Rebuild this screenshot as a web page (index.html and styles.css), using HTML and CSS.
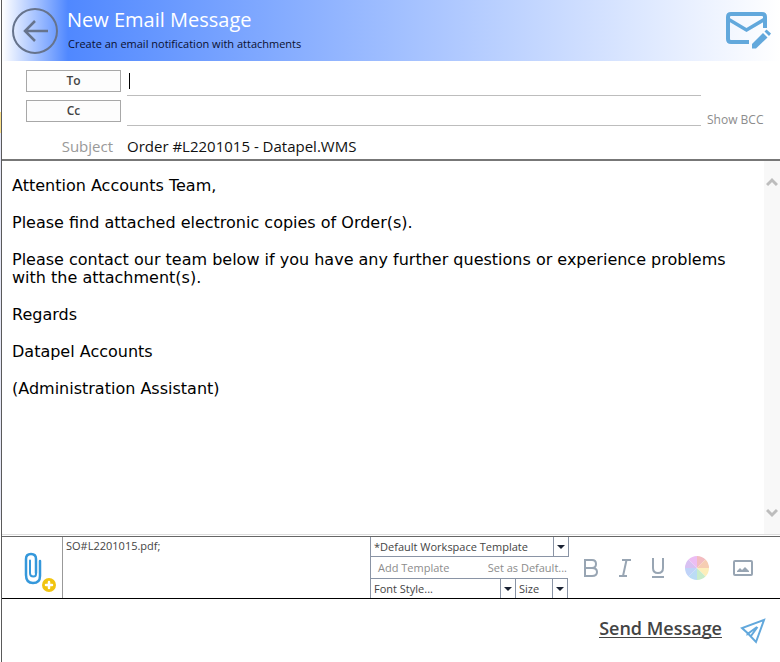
FILE: index.html
```html
<!DOCTYPE html>
<html lang="en">
<head>
  <meta charset="UTF-8">
  <meta name="viewport" content="width=device-width, initial-scale=1.0">
  <title>New Email Message</title>
  <link rel="stylesheet" href="styles.css">
</head>
<body>
  <form class="window">
    <header class="header">
      <button type="button" class="icon-btn" aria-label="Back">
        <svg width="46" height="46" viewBox="0 0 46 46" fill="none" stroke="#66738c">
          <circle cx="23" cy="23" r="22" stroke-width="2"/>
          <path d="M36 23H13M23 13L13 23L23 33" stroke-width="2.500"/>
        </svg>
      </button>
      <div class="heading">
        <h1>New Email Message</h1>
        <p>Create an email notification with attachments</p>
      </div>
      <svg class="mail" width="46" height="38" viewBox="0 0 46 38" fill="none" stroke="#62a8dc">
        <path d="M39 16V5Q39 2 36 2H5Q2 2 2 5V27Q2 30 5 30H23" stroke-width="4"/>
        <path d="M2 7L20.500 18L39 7" stroke-width="3.500"/>
        <path d="M26 36.500V32L37 21L41.500 25.500L30 36.500Z" fill="#62a8dc" stroke="none"/>
        <path d="M38.500 19.500L40.500 17.500L45 21.500L43 24Z" fill="#62a8dc" stroke="none"/>
      </svg>
    </header>

    <section class="address">
      <button type="button" class="pick">To</button>
      <div class="field"><span class="caret"></span><input type="text" aria-label="To"></div>
      <button type="button" class="pick">Cc</button>
      <div class="field"><input type="text" aria-label="Cc"></div>
      <a class="bcc" href="#">Show BCC</a>
      <label class="subject-label" for="subject">Subject</label>
      <input class="subject" id="subject" type="text" value="Order #L2201015 - Datapel.WMS">
    </section>

    <section class="editor">
      <div class="message" contenteditable="true" role="textbox" aria-multiline="true" aria-label="Message" spellcheck="false">
        <p>Attention Accounts Team,</p>
        <p>Please find attached electronic copies of Order(s).</p>
        <p>Please contact our team below if you have any further questions or experience problems with the attachment(s).</p>
        <p>Regards</p>
        <p>Datapel Accounts</p>
        <p>(Administration Assistant)</p>
      </div>
      <div class="scrollbar">
        <button type="button" class="icon-btn" aria-label="Scroll up">
          <svg width="12" height="10" viewBox="0 0 12 10" fill="none" stroke="#bdbdbd" stroke-width="3"><path d="M1 8L6 3L11 8"/></svg>
        </button>
        <button type="button" class="icon-btn" aria-label="Scroll down">
          <svg width="12" height="10" viewBox="0 0 12 10" fill="none" stroke="#bdbdbd" stroke-width="3"><path d="M1 2L6 7L11 2"/></svg>
        </button>
      </div>
    </section>

    <section class="toolbar">
      <button type="button" class="icon-btn attach" aria-label="Add attachment">
        <svg width="32" height="40" viewBox="0 0 32 40" fill="none" stroke="#3598db" stroke-linecap="round">
          <path d="M12 9V22Q12 24.500 9.500 24.500Q6 24.500 6 21V8.500" stroke-width="2"/>
          <path d="M12 21V7Q12 2 7 2Q2 2 2 7V23Q2 31 9 31Q16 31 16 24V9" stroke-width="2.500"/>
          <circle cx="25" cy="33" r="7" fill="#f1c40f" stroke="none"/>
          <path d="M25 30V36M22 33H28" stroke="#fff" stroke-width="2.500"/>
        </svg>
      </button>
      <div class="files">SO#L2201015.pdf;</div>
      <div class="templates">
        <div class="select">
          <select aria-label="Template"><option>*Default Workspace Template</option></select>
        </div>
        <div class="links">
          <a href="#">Add Template</a>
          <a href="#">Set as Default...</a>
        </div>
        <div class="fonts">
          <div class="select style">
            <select aria-label="Font style"><option>Font Style...</option></select>
          </div>
          <div class="select size">
            <select aria-label="Font size"><option>Size</option></select>
          </div>
        </div>
      </div>
      <div class="format">
        <button type="button" class="icon-btn" aria-label="Bold">
          <svg width="16" height="20" viewBox="0 0 16 20" fill="none" stroke="#98a5b3" stroke-width="2"><path d="M2 2H9Q13 2 13 6Q13 10 9 10H2M9 10Q14 10 14 14Q14 18 9 18H2M2 1V19"/></svg>
        </button>
        <button type="button" class="icon-btn" aria-label="Italic">
          <svg width="12" height="20" viewBox="0 0 12 20" fill="none" stroke="#98a5b3" stroke-width="2"><path d="M3 2H12M0 18H8M7.500 2L4 18"/></svg>
        </button>
        <button type="button" class="icon-btn" aria-label="Underline">
          <svg width="14" height="20" viewBox="0 0 14 20" fill="none" stroke="#98a5b3" stroke-width="2"><path d="M2 0V10Q2 15 7 15Q12 15 12 10V0M1 19H13"/></svg>
        </button>
        <button type="button" class="icon-btn" aria-label="Text colour">
          <svg width="24" height="24" viewBox="-12 -12 24 24">
            <path fill="#f3bcc0" d="M0 0V-12A12 12 0 0 1 8.500-8.500Z"/>
            <path fill="#f6cdb2" d="M0 0L8.500-8.500A12 12 0 0 1 12 0Z"/>
            <path fill="#fdeebb" d="M0 0H12A12 12 0 0 1 8.500 8.500Z"/>
            <path fill="#c9eccb" d="M0 0L8.500 8.500A12 12 0 0 1 0 12Z"/>
            <path fill="#bbdcf5" d="M0 0V12A12 12 0 0 1-8.500 8.500Z"/>
            <path fill="#c0d3f8" d="M0 0L-8.500 8.500A12 12 0 0 1-12 0Z"/>
            <path fill="#d8c1f2" d="M0 0H-12A12 12 0 0 1-8.500-8.500Z"/>
            <path fill="#ecbdf3" d="M0 0L-8.500-8.500A12 12 0 0 1 0-12Z"/>
          </svg>
        </button>
        <button type="button" class="icon-btn picture" aria-label="Insert picture">
          <svg width="20" height="16" viewBox="0 0 20 16"><rect x="1" y="1" width="18" height="14" rx="1" fill="none" stroke="#98a5b3" stroke-width="2"/><path fill="#98a5b3" d="M4 12V11L7 8L9 10L12 7L16 11V12Z"/></svg>
        </button>
      </div>
    </section>

    <footer class="footer">
      <button type="submit" class="send">
        <span>Send Message</span>
        <svg width="26" height="26" viewBox="0 0 26 26" fill="none" stroke="#62a8dc" stroke-width="2"><path d="M24 2L2 10L7.500 15L16 24ZM7.500 15V16L17 9M11 18L17.500 9"/></svg>
      </button>
    </footer>
  </form>
</body>
</html>
```
FILE: styles.css
```css
* {
  box-sizing: border-box;
}
body {
  margin: 0;
  padding-left: 1px;
  background: linear-gradient(#fff 112px, #fbe08a 112px, #fbe08a 133px, #e4e6f5 133px, #e4e6f5 520px, #fff 520px);
  font-family: "Open Sans", "Noto Sans", sans-serif;
  font-size: 12px;
  color: #444;
}
h1, p {
  margin: 0;
}
button, input, select {
  font: inherit;
  color: inherit;
}
input {
  width: 100%;
  min-width: 0;
  padding: 0;
  border: 0;
  outline: 0;
  background: none;
}
a {
  color: #8c8c8c;
  text-decoration: none;
}
svg {
  display: block;
}
.icon-btn {
  padding: 0;
  border: 0;
  background: none;
}
.window {
  display: flex;
  flex-direction: column;
  min-height: 100vh;
  border-left: 1px solid #5a5a5a;
  background: #fff;
}

.header {
  display: flex;
  align-items: center;
  gap: 9px;
  height: 61px;
  padding: 0 8px 0 10px;
  background: linear-gradient(90deg, #fff, #5088ff 66px, #fff);
}
.heading {
  flex: 1;
  color: #fff;
}
.heading h1 {
  font-size: 20px;
  line-height: 24px;
  font-weight: 400;
}
.heading p {
  padding: 4px 0 2px 1px;
  font-size: 11px;
  line-height: 16px;
  color: #0a1030;
}

.address {
  display: grid;
  grid-template-columns: 95px 1fr 73px;
  column-gap: 6px;
  padding: 5px 0 0 24px;
  border-bottom: 2px solid #777;
}
.pick {
  grid-column: 1;
  height: 22px;
  margin-top: 4px;
  padding: 0;
  border: 1px solid #a8a8a8;
  background: #fdfdfd;
  font-weight: 600;
  line-height: 18px;
}
.field {
  display: flex;
  align-items: center;
  height: 30px;
  border-bottom: 1px solid #bdbdbd;
}
.caret {
  width: 1px;
  height: 16px;
  margin-left: 2px;
  background: #000;
}
.bcc {
  align-self: end;
  line-height: 12px;
}
.subject-label,
.subject {
  margin-top: 7px;
  font-size: 15px;
  line-height: 26px;
}
.subject-label {
  grid-column: 1;
  padding-right: 8px;
  text-align: right;
  color: #999;
}
.subject {
  grid-column: 2 / 4;
  color: #111;
}

.editor {
  display: flex;
  flex: 1;
  border-bottom: 1px solid #ddd;
}
.message {
  flex: 1;
  padding: 16px 10px;
  outline: 0;
  font-family: "DejaVu Sans", sans-serif;
  font-size: 16px;
  line-height: 18px;
  color: #000;
}
.message p {
  margin-bottom: 19px;
}
.scrollbar {
  display: flex;
  flex-direction: column;
  justify-content: space-between;
  width: 16px;
  padding: 16px 2px;
  background: #f8f8f8;
}

.toolbar {
  display: flex;
  height: 63px;
  margin-top: 1px;
  border-top: 1px solid #666;
  border-bottom: 1px solid #000;
}
.attach {
  width: 60px;
  padding: 8px 0 0 22px;
}
.files {
  flex: 1;
  padding: 0 3px;
  border-left: 1px solid #999;
  font-size: 11px;
  line-height: 17px;
}
.templates {
  display: flex;
  flex-direction: column;
  width: 199px;
  border-left: 1px solid #8a94a5;
}
.select {
  position: relative;
  border: 1px solid #8a94a5;
  border-width: 0 1px 1px 0;
}
.select select {
  display: block;
  width: 100%;
  height: 19px;
  padding: 0 16px 0 3px;
  border: 0;
  border-radius: 0;
  outline: 0;
  background: none;
  appearance: none;
  font-size: 11px;
}
/* drop button with its arrow */
.select::before {
  content: "";
  position: absolute;
  top: 0;
  right: 0;
  width: 14px;
  height: 100%;
  border-left: 1px solid #8a94a5;
}
.select::after {
  content: "";
  position: absolute;
  top: 8px;
  right: 3px;
  border: 4px solid transparent;
  border-top-color: #1a2233;
  border-bottom: 0;
}
.links {
  display: flex;
  justify-content: space-between;
  padding: 0 2px 0 7px;
  line-height: 21px;
  font-size: 11px;
}
.fonts {
  display: flex;
  margin-right: 1px;
  border-top: 1px solid #8a94a5;
}
.fonts .select {
  border-bottom: 0;
}
.style {
  flex: 1;
}
.size {
  width: 52px;
}
.format {
  display: flex;
  align-items: center;
  gap: 20px;
  padding: 0 27px 0 14px;
}
.picture {
  margin-left: 4px;
}

.footer {
  display: flex;
  justify-content: flex-end;
  height: 63px;
  padding: 0 14px;
}
.send {
  display: flex;
  align-items: center;
  gap: 18px;
  padding: 0;
  border: 0;
  background: none;
  font-size: 18px;
  font-weight: 600;
}
.send span {
  margin-bottom: 4px;
  border-bottom: 1px solid #444;
  line-height: 18px;
}
```
